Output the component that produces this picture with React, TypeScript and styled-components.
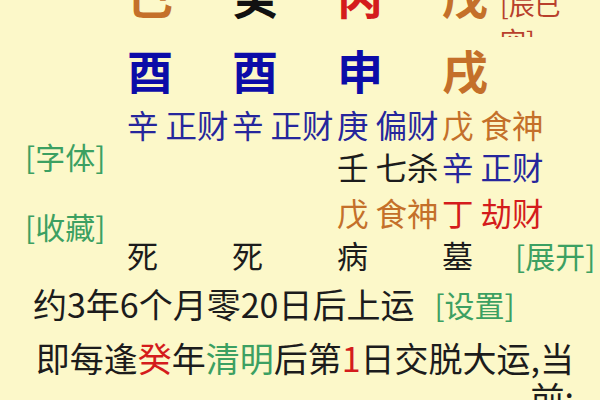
import React from "react";
import styled, { createGlobalStyle } from "styled-components";

const GlobalStyle = createGlobalStyle`
  html, body { margin: 0; padding: 0; background: #fcf8c9; }
  body {
    font-family: "Noto Sans CJK SC", "Noto Sans", sans-serif;
    overflow: hidden;
  }
`;

const C = {
  ink: "#1c1c1c",
  blue: "#0c0ca8",
  navy: "#26269c",
  orange: "#c4702a",
  red: "#d41c1c",
  green: "#3ca062",
  rust: "#b8402c",
};

const Page = styled.div`
  width: 600px;
  height: 400px;
  overflow: hidden;
  display: flex;
  flex-direction: column;
`;

const Pillars = styled.div`
  padding-left: 127px;
  display: flex;
  flex-direction: column;
`;

const BigRow = styled.div<{ $h: number; $top?: number }>`
  display: flex;
  align-items: flex-start;
  height: ${(p) => p.$h}px;
  margin-top: ${(p) => p.$top ?? 0}px;
  overflow: hidden;
`;

const BigChar = styled.div<{ $c: string; $w?: number; $lh: number }>`
  flex: none;
  width: ${(p) => p.$w ?? 105}px;
  font-size: 46px;
  font-weight: 700;
  line-height: ${(p) => p.$lh}px;
  color: ${(p) => p.$c};
`;

const Note = styled.div`
  flex: none;
  width: 68px;
  margin-top: 29px;
  font-size: 26px;
  line-height: 36px;
  color: ${C.rust};
`;

const Middle = styled.div`
  display: flex;
`;

const Rail = styled.div`
  flex: none;
  width: 127px;
  padding-left: 25px;
  box-sizing: border-box;
  display: flex;
  flex-direction: column;
  gap: 30px;
  padding-top: 35px;
`;

const Link = styled.div<{ $ml?: number }>`
  font-size: 30px;
  line-height: 40px;
  color: ${C.green};
  white-space: nowrap;
  margin-left: ${(p) => p.$ml ?? 0}px;
`;

const Main = styled.div`
  display: flex;
  flex-direction: column;
`;

const TextRow = styled.div<{ $h: number; $fs: number; $indent?: number }>`
  display: flex;
  align-items: center;
  height: ${(p) => p.$h}px;
  line-height: ${(p) => p.$h}px;
  font-size: ${(p) => p.$fs}px;
  padding-left: ${(p) => p.$indent ?? 0}px;
  white-space: nowrap;
  color: ${C.ink};
`;

const Cell = styled.div<{ $w?: number }>`
  flex: none;
  width: ${(p) => p.$w ?? 105}px;
`;

const Tone = styled.span<{ $c: string }>`
  color: ${(p) => p.$c};
`;

const Footer = styled.div`
  padding-left: 33px;
  display: flex;
  flex-direction: column;
`;

const Line = styled.div<{ $h: number }>`
  display: flex;
  align-items: center;
  font-size: 34px;
  height: ${(p) => p.$h}px;
  line-height: ${(p) => p.$h}px;
  color: ${C.ink};
  white-space: nowrap;
`;

const Para = styled.div`
  width: 541px;
  font-size: 34px;
  line-height: 40px;
  color: ${C.ink};
  text-align: right;
`;

const hidden = [
  { t: "辛", g: "正财", c: C.navy },
  { t: "辛", g: "正财", c: C.navy },
  { t: "庚", g: "偏财", c: C.navy },
  { t: "戊", g: "食神", c: C.orange },
];

export default function App() {
  return (
    <Page>
      <GlobalStyle />
      <Pillars>
        <BigRow $h={80} $top={-43}>
          <BigChar $c={C.orange} $lh={75}>己</BigChar>
          <BigChar $c="#111" $lh={75}>癸</BigChar>
          <BigChar $c={C.red} $lh={75}>丙</BigChar>
          <BigChar $c={C.orange} $lh={75} $w={58}>戊</BigChar>
          <Note>[辰巳空]</Note>
        </BigRow>
        <BigRow $h={64}>
          <BigChar $c={C.blue} $lh={64}>酉</BigChar>
          <BigChar $c={C.blue} $lh={64}>酉</BigChar>
          <BigChar $c={C.blue} $lh={64}>申</BigChar>
          <BigChar $c={C.orange} $lh={64}>戌</BigChar>
        </BigRow>
      </Pillars>
      <Middle>
        <Rail>
          <Link>[字体]</Link>
          <Link>[收藏]</Link>
        </Rail>
        <Main>
          <TextRow $h={47} $fs={31.5}>
            {hidden.map((h, i) => (
              <Cell key={i}>
                <Tone $c={h.c}>
                  {h.t} {h.g}
                </Tone>
              </Cell>
            ))}
          </TextRow>
          <TextRow $h={36} $fs={31.5} $indent={210}>
            <Cell>
              <Tone $c={C.ink}>壬 七杀</Tone>
            </Cell>
            <Cell>
              <Tone $c={C.navy}>辛 正财</Tone>
            </Cell>
          </TextRow>
          <TextRow $h={56} $fs={31.5} $indent={210}>
            <Cell>
              <Tone $c={C.orange}>戊 食神</Tone>
            </Cell>
            <Cell>
              <Tone $c={C.red}>丁 劫财</Tone>
            </Cell>
          </TextRow>
          <TextRow $h={30} $fs={31}>
            <Cell>死</Cell>
            <Cell>死</Cell>
            <Cell>病</Cell>
            <Cell $w={73}>墓</Cell>
            <Link>[展开]</Link>
          </TextRow>
        </Main>
      </Middle>
      <Footer>
        <Line $h={68}>
          约3年6个月零20日后上运
          <Link $ml={20}>[设置]</Link>
        </Line>
        <Para>
          即每逢<Tone $c={C.red}>癸</Tone>年<Tone $c={C.green}>清明</Tone>后第
          <Tone $c={C.red}>1</Tone>日交脱大运,当前:
        </Para>
      </Footer>
    </Page>
  );
}
